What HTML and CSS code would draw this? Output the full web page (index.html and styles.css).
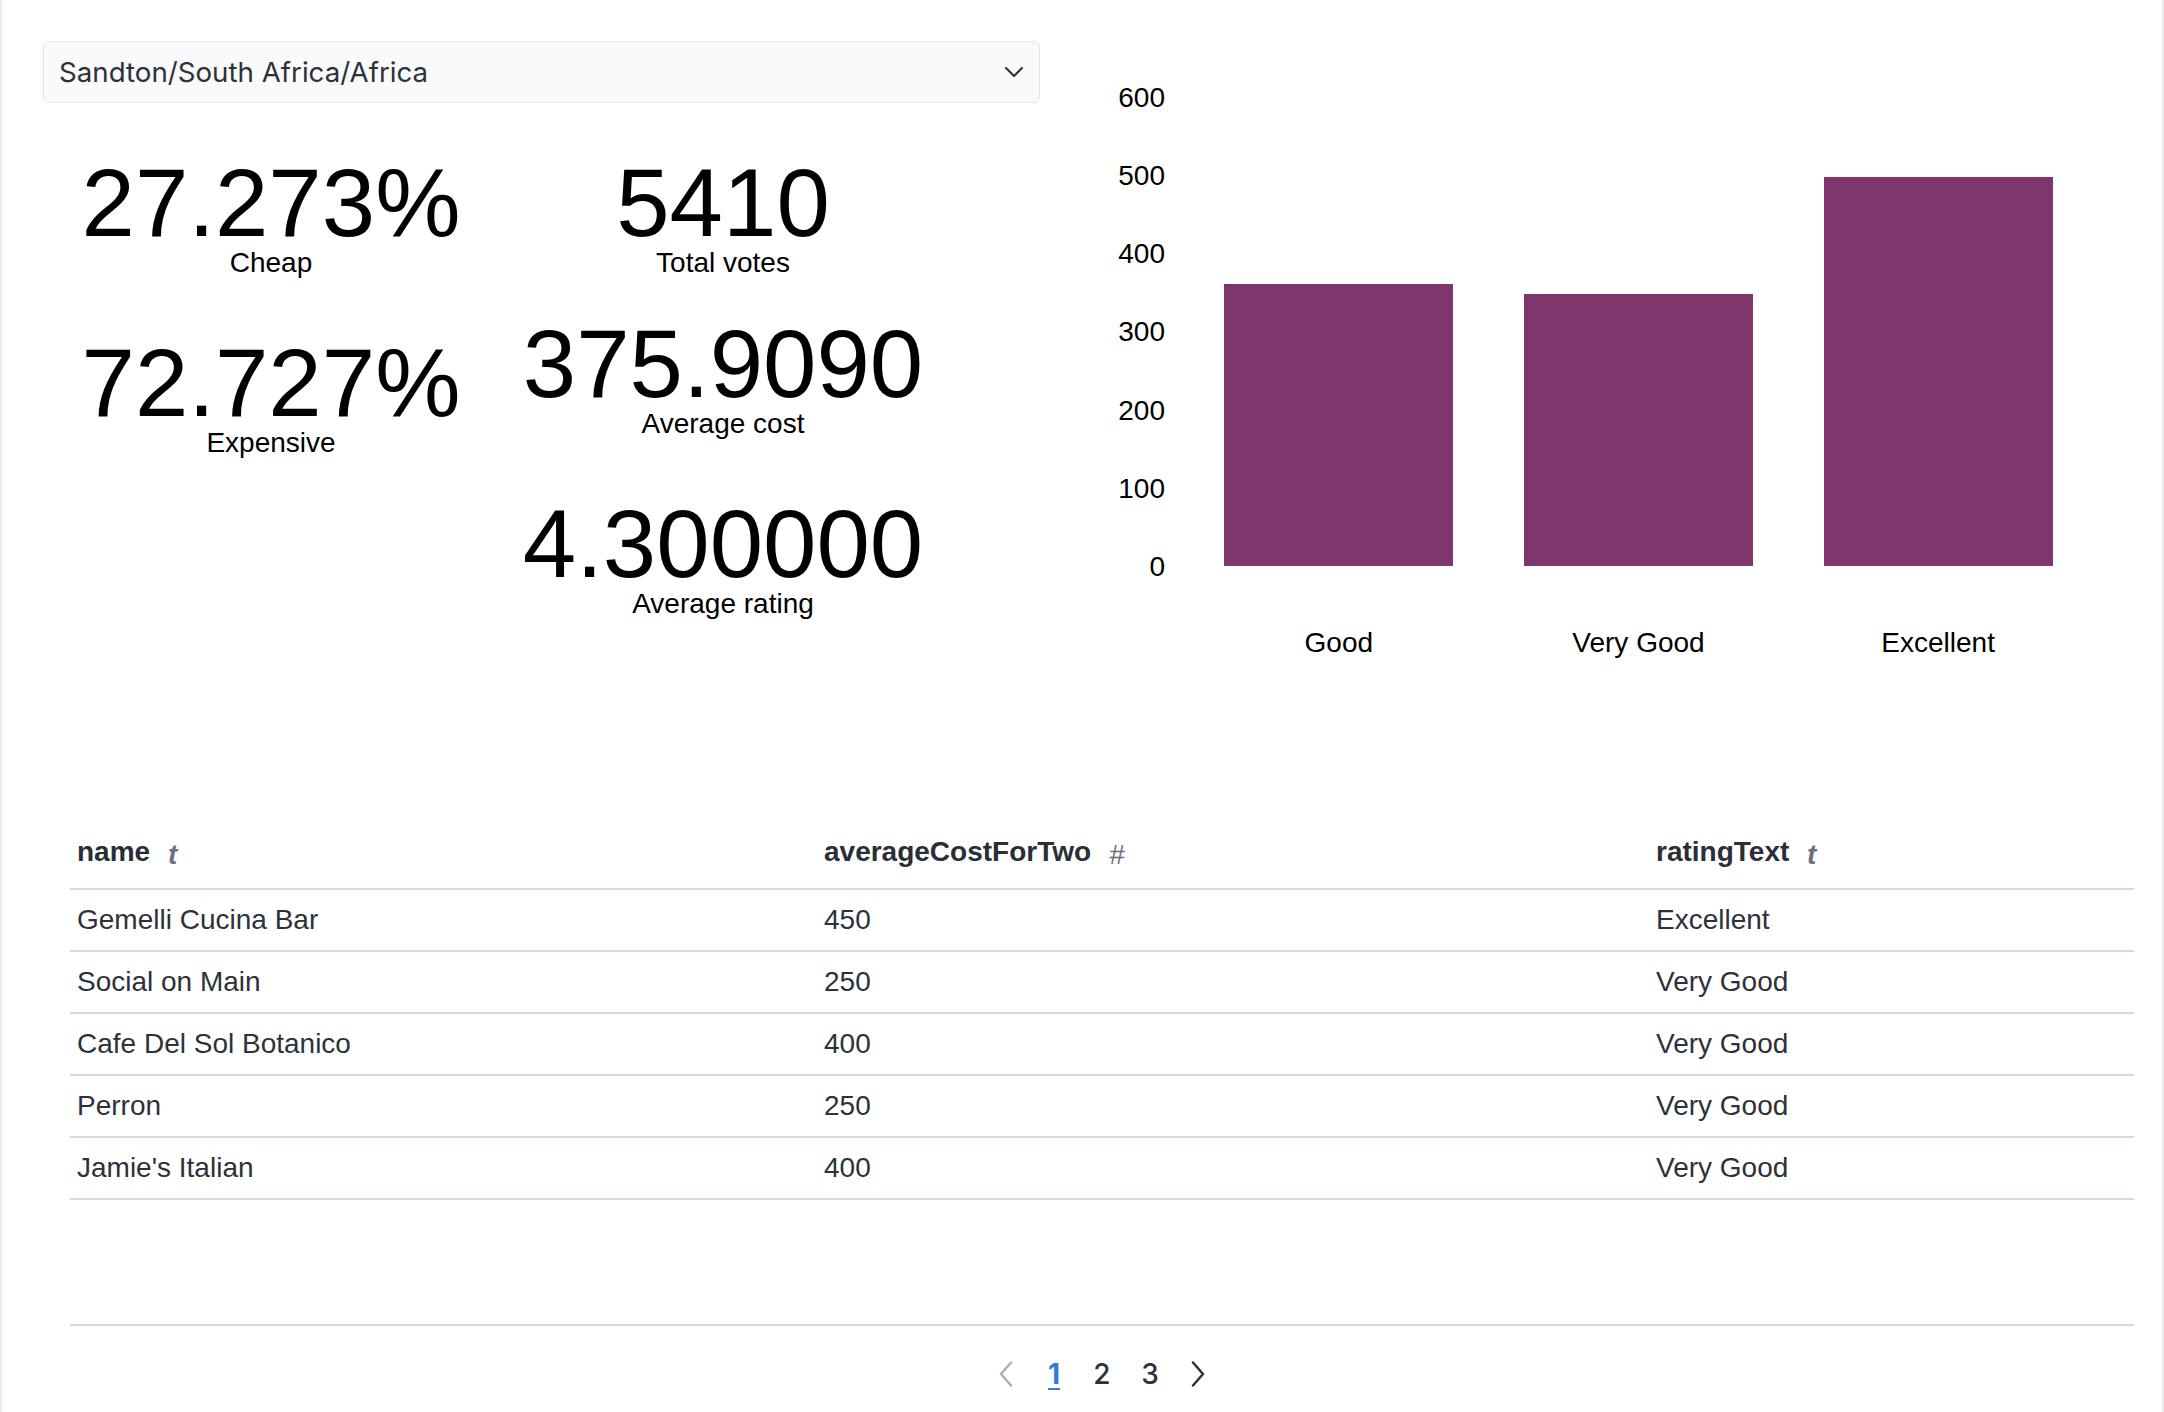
FILE: index.html
```html
<!DOCTYPE html>
<html lang="en">
<head>
<meta charset="utf-8">
<title>Sandton dashboard</title>
<link rel="stylesheet" href="styles.css">
</head>
<body>
<div class="page">
  <div class="top">
    <div class="left">
      <div class="select">
        <span class="select-text">Sandton/South Africa/Africa</span>
        <svg class="select-chevron" width="18" height="10" viewBox="0 0 18 10"><polyline points="1,1 9,9 17,1" fill="none" stroke="#2e3138" stroke-width="2" stroke-linecap="round" stroke-linejoin="round"/></svg>
      </div>
      <div class="stats">
        <div class="stat-col col-a">
          <div class="stat"><div class="num">27.273%</div><div class="lbl">Cheap</div></div>
          <div class="stat"><div class="num">72.727%</div><div class="lbl">Expensive</div></div>
        </div>
        <div class="stat-col col-b">
          <div class="stat stat-first"><div class="num">5410</div><div class="lbl">Total votes</div></div>
          <div class="stat"><div class="num">375.9090</div><div class="lbl">Average cost</div></div>
          <div class="stat"><div class="num">4.300000</div><div class="lbl">Average rating</div></div>
        </div>
      </div>
    </div>
    <div class="chart">
      <div class="y-axis">
        <span>600</span><span>500</span><span>400</span><span>300</span><span>200</span><span>100</span><span>0</span>
      </div>
      <div class="plot-col">
        <div class="plot">
          <div class="band"><div class="bar" style="height:282px"></div></div>
          <div class="band"><div class="bar" style="height:272px"></div></div>
          <div class="band"><div class="bar" style="height:389px"></div></div>
        </div>
        <div class="x-labels"><span>Good</span><span>Very Good</span><span>Excellent</span></div>
      </div>
    </div>
  </div>

  <div class="table-wrap">
    <table class="data">
      <colgroup><col class="c1"><col class="c2"><col class="c3"></colgroup>
      <thead>
        <tr>
          <th>name <span class="type-ico">t</span></th>
          <th>averageCostForTwo <span class="type-ico hash">#</span></th>
          <th>ratingText <span class="type-ico">t</span></th>
        </tr>
      </thead>
      <tbody>
        <tr><td>Gemelli Cucina Bar</td><td>450</td><td>Excellent</td></tr>
        <tr><td>Social on Main</td><td>250</td><td>Very Good</td></tr>
        <tr><td>Cafe Del Sol Botanico</td><td>400</td><td>Very Good</td></tr>
        <tr><td>Perron</td><td>250</td><td>Very Good</td></tr>
        <tr><td>Jamie's Italian</td><td>400</td><td>Very Good</td></tr>
      </tbody>
    </table>
    <div class="pager-rule"></div>
    <nav class="pager">
      <span class="pg pg-arrow"><svg width="14" height="26" viewBox="0 0 14 26"><polyline points="12,1.5 2,13 12,24.5" fill="none" stroke="#a9afbd" stroke-width="2.5" stroke-linecap="round" stroke-linejoin="round"/></svg></span>
      <span class="pg active">1</span>
      <span class="pg">2</span>
      <span class="pg">3</span>
      <span class="pg pg-arrow"><svg width="14" height="26" viewBox="0 0 14 26"><polyline points="2,1.5 12,13 2,24.5" fill="none" stroke="#2e3138" stroke-width="2.5" stroke-linecap="round" stroke-linejoin="round"/></svg></span>
    </nav>
  </div>
</div>
</body>
</html>
```

FILE: styles.css
```css
html, body {
  margin: 0;
  padding: 0;
}

body {
  background: #ececec;
  font-family: "Liberation Sans", Arial, sans-serif;
  color: #000;
}

.page {
  margin: 0 2px;
  background: #ffffff;
  min-height: 1412px;
}

.top {
  display: flex;
  align-items: flex-start;
}

.left {
  width: 997px;
  margin-left: 41px;
  padding-top: 41px;
}

.select {
  box-sizing: border-box;
  height: 62px;
  border: 1px solid #e1e4ef;
  border-radius: 6px;
  background: #f9fafc;
  padding: 0 16px 0 15px;
  display: flex;
  align-items: center;
  justify-content: space-between;
}

.select-text {
  font-family: Inter, "Noto Sans", sans-serif;
  font-size: 27.7px;
  line-height: 32px;
  color: #2e3138;
}

.select-chevron {
  display: block;
}

.stats {
  display: flex;
  margin-top: 52px;
}

.stat-col {
  display: flex;
  flex-direction: column;
  gap: 58px;
}

.col-a {
  width: 456px;
}

.col-b {
  width: 448px;
}

.stat-first {
  margin-bottom: -19px;
}

.stat {
  text-align: center;
}

.num {
  font-size: 96px;
  line-height: 95px;
  color: #000;
}

.lbl {
  font-size: 28px;
  line-height: 28px;
  margin-top: -1px;
  color: #000;
}

.chart {
  display: flex;
  gap: 24px;
  margin-left: 40px;
}

.y-axis {
  width: 85px;
  height: 501px;
  margin-top: 82px;
  display: flex;
  flex-direction: column;
  justify-content: space-between;
  text-align: right;
  font-size: 28px;
  line-height: 32px;
}

.plot-col {
  width: 899px;
  margin-top: 97px;
}

.plot {
  height: 469px;
  display: flex;
  align-items: flex-end;
}

.band {
  flex: 1;
  height: 100%;
  display: flex;
  justify-content: center;
  align-items: flex-end;
}

.bar {
  width: 229px;
  background: #7f366d;
}

.x-labels {
  display: flex;
  margin-top: 61px;
  font-size: 28px;
  line-height: 32px;
}

.x-labels span {
  flex: 1;
  text-align: center;
}

.table-wrap {
  margin: 169px 28px 0 68px;
}

.data {
  width: 100%;
  table-layout: fixed;
  border-collapse: separate;
  border-spacing: 0;
  font-size: 28px;
  line-height: 32px;
}

.c1 { width: 747px; }
.c2 { width: 832px; }
.c3 { width: 485px; }

.data th {
  box-sizing: border-box;
  height: 62px;
  text-align: left;
  font-weight: 700;
  color: #2a2e37;
  padding: 8px 7px 20px;
  border-bottom: 2px solid #d5d9e4;
  white-space: nowrap;
  vertical-align: top;
}

.data td {
  color: #2e3139;
  padding: 14px 7px;
  border-bottom: 2px solid #d5d9e4;
  white-space: nowrap;
}

.type-ico {
  margin-left: 10px;
  font-style: italic;
  font-weight: 700;
  font-size: 28px;
  line-height: 20px;
  color: #6b7080;
  vertical-align: -3px;
}

.type-ico.hash {
  font-weight: 400;
}

.pager-rule {
  height: 2px;
  background: #d5d9e4;
  margin-top: 124px;
}

.pager {
  display: flex;
  justify-content: center;
  align-items: center;
  margin-top: 32px;
  height: 32px;
}

.pg {
  width: 48px;
  text-align: center;
  font-family: Inter, "Noto Sans", sans-serif;
  font-size: 28px;
  line-height: 32px;
  font-weight: 500;
  color: #2e3138;
}

.pg-arrow {
  display: flex;
  justify-content: center;
  align-items: center;
  height: 32px;
}

.pg.active {
  color: #2f7bd6;
  font-weight: 700;
  text-decoration: underline;
  text-decoration-thickness: 2px;
  text-underline-offset: 4px;
}
```
